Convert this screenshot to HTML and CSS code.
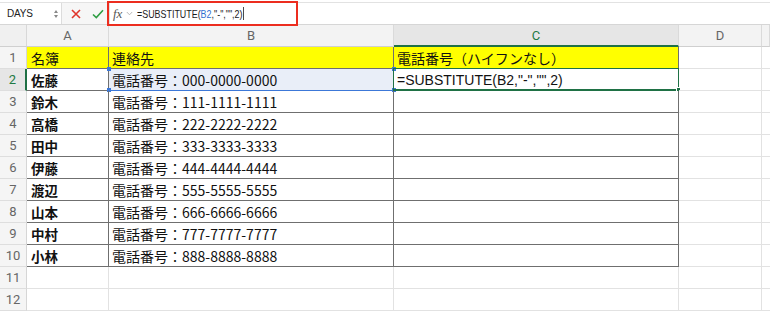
FILE: index.html
```html
<!DOCTYPE html>
<html lang="ja">
<head>
<meta charset="utf-8">
<link rel="stylesheet" href="styles.css">
</head>
<body>
<div class="app">
  <div class="toolbar">
    <div class="namebox">
      <span class="name">DAYS</span>
      <span class="spin"><i class="up"></i><i class="down"></i></span>
    </div>
    <div class="tbtn cancel">
      <svg width="10" height="10" viewBox="0 0 10 10"><path d="M1 1L9 9M9 1L1 9" stroke="#e0352b" stroke-width="1.6" fill="none"/></svg>
    </div>
    <div class="tbtn ok">
      <svg width="12" height="10" viewBox="0 0 12 10"><path d="M1 5.5L4.3 8.6L11 1.2" stroke="#2f9e44" stroke-width="1.6" fill="none"/></svg>
    </div>
    <div class="fbar">
      <span class="fx">fx</span>
      <svg class="chev" width="7" height="5" viewBox="0 0 7 5"><path d="M0.8 1L3.5 3.8L6.2 1" stroke="#b0b0b0" stroke-width="0.9" fill="none"/></svg>
      <span class="ftext">=SUBSTITUTE(<span class="ref">B2</span>,"-","",2)<span class="caret"></span></span>
      <div class="annot"></div>
    </div>
  </div>
  <div class="sheet">
    <div class="corner"></div>
    <div class="ch">A</div>
    <div class="ch">B</div>
    <div class="ch sel">C</div>
    <div class="ch">D</div>
    <div class="ch last"></div>

    <div class="rh">1</div>
    <div class="c d da yl">名簿</div>
    <div class="c d db yl">連絡先</div>
    <div class="c d dc yl">電話番号（ハイフンなし）</div>
    <div class="c"></div>
    <div class="c last"></div>

    <div class="rh sel">2</div>
    <div class="c d da nm">佐藤</div>
    <div class="c d db refcell">電話番号：000-0000-0000<span class="refbox"><i class="h tl"></i><i class="h tr"></i><i class="h bl"></i><i class="h br"></i></span></div>
    <div class="c d dc active"><span class="formula">=SUBSTITUTE(B2,"-","",2)</span><span class="actbox"><i class="gh"></i></span></div>
    <div class="c"></div>
    <div class="c last"></div>

    <div class="rh">3</div>
    <div class="c d da nm">鈴木</div>
    <div class="c d db">電話番号：111-1111-1111</div>
    <div class="c d dc"></div>
    <div class="c"></div>
    <div class="c last"></div>

    <div class="rh">4</div>
    <div class="c d da nm">高橋</div>
    <div class="c d db">電話番号：222-2222-2222</div>
    <div class="c d dc"></div>
    <div class="c"></div>
    <div class="c last"></div>

    <div class="rh">5</div>
    <div class="c d da nm">田中</div>
    <div class="c d db">電話番号：333-3333-3333</div>
    <div class="c d dc"></div>
    <div class="c"></div>
    <div class="c last"></div>

    <div class="rh">6</div>
    <div class="c d da nm">伊藤</div>
    <div class="c d db">電話番号：444-4444-4444</div>
    <div class="c d dc"></div>
    <div class="c"></div>
    <div class="c last"></div>

    <div class="rh">7</div>
    <div class="c d da nm">渡辺</div>
    <div class="c d db">電話番号：555-5555-5555</div>
    <div class="c d dc"></div>
    <div class="c"></div>
    <div class="c last"></div>

    <div class="rh">8</div>
    <div class="c d da nm">山本</div>
    <div class="c d db">電話番号：666-6666-6666</div>
    <div class="c d dc"></div>
    <div class="c"></div>
    <div class="c last"></div>

    <div class="rh">9</div>
    <div class="c d da nm">中村</div>
    <div class="c d db">電話番号：777-7777-7777</div>
    <div class="c d dc"></div>
    <div class="c"></div>
    <div class="c last"></div>

    <div class="rh">10</div>
    <div class="c d da nm">小林</div>
    <div class="c d db">電話番号：888-8888-8888</div>
    <div class="c d dc"></div>
    <div class="c"></div>
    <div class="c last"></div>

    <div class="rh">11</div>
    <div class="c"></div>
    <div class="c"></div>
    <div class="c"></div>
    <div class="c"></div>
    <div class="c last"></div>

    <div class="rh">12</div>
    <div class="c"></div>
    <div class="c"></div>
    <div class="c"></div>
    <div class="c"></div>
    <div class="c last"></div>
  </div>
</div>
</body>
</html>
```
FILE: styles.css
```css
* { box-sizing: border-box; }
html, body { margin: 0; padding: 0; background: #fff; }
body { width: 770px; height: 311px; overflow: hidden; font-family: "Noto Sans CJK JP", "Liberation Sans", sans-serif; }

.toolbar {
  height: 23px;
  display: flex;
  align-items: stretch;
  background: #f6f6f6;
  border-top: 1px solid #e2e2e2;
  border-bottom: 1px solid #d6d6d6;
  margin-top: 2px;
}
.namebox {
  width: 62px;
  display: flex;
  align-items: center;
  justify-content: space-between;
  padding: 0 3px 0 7px;
  background: #fff;
  border-right: 1px solid #dcdcdc;
}
.name { font-family: "Liberation Sans", sans-serif; font-size: 10px; color: #222; letter-spacing: -0.2px; }
.spin { display: flex; flex-direction: column; gap: 2px; }
.spin i { display: block; width: 0; height: 0; border-left: 2.5px solid transparent; border-right: 2.5px solid transparent; }
.spin .up { border-bottom: 3px solid #888; }
.spin .down { border-top: 3px solid #888; }
.tbtn { display: flex; align-items: center; justify-content: center; }
.cancel { width: 26px; margin-left: 1px; }
.ok { width: 18px; }
.fbar {
  position: relative;
  flex: 1;
  display: flex;
  align-items: center;
  margin-left: 2px;
  background: #fff;
  border-left: 1px solid #e0e0e0;
}
.fx { font-family: "Liberation Serif", serif; font-style: italic; font-size: 13px; color: #555; margin-left: 3px; }
.chev { margin-left: 4px; }
.ftext {
  font-family: "Liberation Sans", sans-serif; font-size: 11px; color: #1a1a1a;
  margin-left: 4px; display: flex; align-items: center;
  transform: scaleX(0.81); transform-origin: left center;
}
.ref { color: #2f6fd1; }
.caret { display: inline-block; width: 1.2px; height: 13px; background: #222; margin-left: 1px; }
.annot {
  position: absolute;
  left: -3px; top: -2px;
  width: 191px; height: 25px;
  border: 2.5px solid #ec2d1f;
}

.sheet {
  display: grid;
  grid-template-columns: 27px 82px 285px 285px 83px 1fr;
  grid-template-rows: 22px repeat(12, 22px);
}
.corner { background: #f0f0f0; border-right: 1px solid #d8d8d8; border-bottom: 1px solid #d0d0d0; }
.ch {
  background: #f3f3f3;
  border-right: 1px solid #dadada;
  border-bottom: 1px solid #cfcfcf;
  display: flex; align-items: center; justify-content: center;
  font-family: "Roboto", "Liberation Sans", sans-serif;
  font-size: 13px; color: #666;
}
.ch.sel { background: #e6e6e6; color: #1f7a44; border-bottom: 2px solid #1f7145; }
.rh {
  background: #f5f5f5;
  border-right: 1px solid #d6d6d6;
  border-bottom: 1px solid #dedede;
  display: flex; align-items: center; justify-content: center;
  font-family: "Roboto", "Liberation Sans", sans-serif;
  font-size: 13px; color: #666;
}
.rh.sel { background: #e6e6e6; color: #1f7a44; border-right: 2px solid #1f7145; }
.c {
  border-right: 1px solid #e2e2e2;
  border-bottom: 1px solid #e2e2e2;
  display: flex; align-items: center;
  padding-left: 3px;
  font-size: 14px; color: #111;
  white-space: nowrap;
  position: relative;
}
.c.last { border-right: none; }
.c.d { border-right: 1px solid #6f6f6f; border-bottom: 1px solid #6f6f6f; }
.c.yl { background: #ffff00; }
.c.da { padding-left: 4px; }
.nm { font-weight: 700; font-size: 13.5px; }
.refcell { background: #e9eef8; }
.refbox {
  position: absolute;
  left: -1px; top: -1px; right: -1px; bottom: -1px;
  border-bottom: 1px solid #3c78d8;
  pointer-events: none;
}
.h { position: absolute; width: 4px; height: 4px; background: #3c78d8; }
.tl { left: -1px; top: -1px; }
.tr { right: -2px; top: -1px; }
.bl { left: -1px; bottom: -2px; }
.br { right: -2px; bottom: -2px; }
.formula { font-family: "Liberation Sans", sans-serif; font-size: 14px; color: #111; }
.actbox {
  position: absolute;
  left: -1px; top: -1px; right: -1px; bottom: -1px;
  border: 1px solid #1f7145;
  border-bottom: 2px solid #1f7145;
}
.gh { position: absolute; right: -3px; bottom: -3px; width: 5px; height: 5px; background: #1f7145; border: 1px solid #fff; }
```
